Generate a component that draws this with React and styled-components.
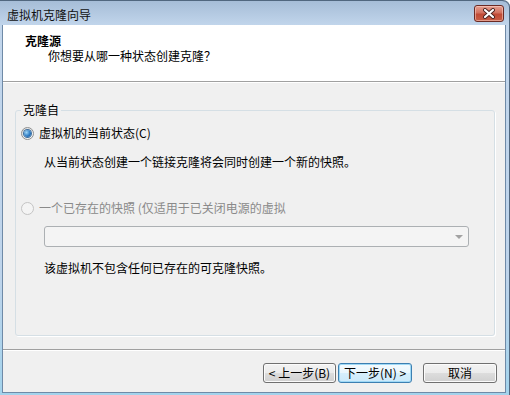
import styled, { createGlobalStyle } from 'styled-components';

const GlobalStyle = createGlobalStyle`
	html, body {
		margin: 0;
		padding: 0;
		background: #fff;
	}
	body {
		font: 12px/16px 'Noto Sans CJK SC', 'Liberation Sans', sans-serif;
		color: #000;
	}
	* {
		box-sizing: border-box;
	}
`;

const Window = styled.div`
	width: 510px;
	height: 395px;
	display: flex;
	flex-direction: column;
	background: linear-gradient(#a6bdd7, #c2d6ec 25px, #bed4eb 70%, #a3d3ec);
	border-top: 1px solid #51677f;
	border-top-right-radius: 7px;
	box-shadow: inset -1px 0 0 #51677f;
	overflow: hidden;
`;

const TitleBar = styled.div`
	height: 24px;
	display: flex;
	justify-content: space-between;
	align-items: flex-start;
	padding-left: 7px;
`;

const Title = styled.span`
	margin-top: 6px;
	font-size: 12px;
	line-height: 16px;
	color: #111;
`;

const CloseBtn = styled.div`
	width: 30px;
	height: 17px;
	margin: 4px 6px 0 0;
	display: flex;
	align-items: center;
	justify-content: center;
	border: 1px solid #6b2a24;
	border-radius: 3px;
	background: linear-gradient(#e6a091, #d2715f 45%, #c04a35 55%, #c85e46);
	box-shadow: inset 0 0 0 1px rgba(255, 220, 210, 0.5);
`;

const Client = styled.div`
	flex: 1;
	margin: 0 4px 2px 2px;
	display: flex;
	flex-direction: column;
	background: #f0f0f0;
	border: 1px solid #6f8aa7;
	border-top: none;
`;

const Header = styled.div`
	height: 57px;
	padding: 8px 0 0 22px;
	background: #fff;
	border-bottom: 1px solid #a0a0a0;
`;

const HeadTitle = styled.div`
	font-weight: bold;
`;

const HeadSub = styled.div`
	margin-top: -1px;
	padding-left: 23px;
`;

const Body = styled.div`
	flex: 1;
	display: flex;
	flex-direction: column;
	padding: 19px 10px 13px 12px;
	border-top: 1px solid #fff;
`;

const Group = styled.fieldset`
	flex: 1;
	margin: 0;
	min-width: 0;
	padding: 0 0 0 5px;
	border: 1px solid #d5dfe5;
	border-radius: 3px;
	box-shadow: 1px 1px 0 #fff;
`;

const Legend = styled.legend`
	padding: 0 2px;
	line-height: 16px;
`;

const RadioRow = styled.label`
	display: flex;
	align-items: center;
	gap: 5px;
	margin-top: ${(p) => p.$top}px;
	color: ${(p) => (p.$disabled ? '#8a8a8a' : '#000')};
	white-space: nowrap;
`;

const Radio = styled.span`
	width: 13px;
	height: 13px;
	flex: none;
	display: flex;
	align-items: center;
	justify-content: center;
	border-radius: 50%;
	border: 1px solid ${(p) => (p.$disabled ? '#c4c4c4' : '#8e8f8f')};
	background: ${(p) =>
		p.$disabled ? '#f4f4f4' : 'linear-gradient(135deg, #dcdcdc, #fbfbfb)'};
	&::after {
		content: '';
		display: ${(p) => (p.$checked ? 'block' : 'none')};
		width: 7px;
		height: 7px;
		border-radius: 50%;
		background: radial-gradient(circle at 35% 35%, #9fd6f7, #2e7cc4 55%, #144f91);
		box-shadow: 0 0 0 1px #3e6f9e;
	}
`;

const Indented = styled.div`
	margin-top: ${(p) => p.$top}px;
	margin-left: 23px;
`;

const Combo = styled.div`
	width: 425px;
	height: 21px;
	margin: 10px 0 0 23px;
	display: flex;
	justify-content: flex-end;
	align-items: center;
	padding-right: 5px;
	background: #f4f4f4;
	border: 1px solid #acb0b3;
	border-radius: 3px;
`;

const Arrow = styled.span`
	width: 0;
	height: 0;
	border-left: 4px solid transparent;
	border-right: 4px solid transparent;
	border-top: 4px solid #a2a2a2;
`;

const Footer = styled.div`
	height: 43px;
	display: flex;
	justify-content: flex-end;
	align-items: flex-start;
	padding: 13px 8px 0 0;
	border-top: 1px solid #a0a0a0;
	box-shadow: inset 0 1px 0 #fff;
`;

const Button = styled.button`
	width: ${(p) => p.$w}px;
	height: 20px;
	margin-left: ${(p) => p.$gap}px;
	padding: 0;
	font: 12px/16px 'Noto Sans CJK SC', 'Liberation Sans', sans-serif;
	color: #000;
	white-space: nowrap;
	border: 1px solid ${(p) => (p.$primary ? '#3c7fb1' : '#707070')};
	border-radius: 3px;
	background: ${(p) =>
		p.$primary
			? 'linear-gradient(#f4fbfe, #e9f6fd 50%, #d6effc 50%, #cbe9fa)'
			: 'linear-gradient(#f3f3f3, #ebebeb 50%, #dddddd 50%, #d0d0d0)'};
	box-shadow: inset 0 0 0 1px ${(p) => (p.$primary ? '#9fd9f6' : '#fbfbfb')};
`;

function App() {
	return (
		<>
			<GlobalStyle />
			<Window>
				<TitleBar>
					<Title>虚拟机克隆向导</Title>
					<CloseBtn>
						<svg width='14' height='11' viewBox='0 0 14 11'>
							<path d='M3 2 L11 9 M11 2 L3 9' stroke='#4a2420' strokeWidth='4' strokeLinecap='round' />
							<path d='M3 2 L11 9 M11 2 L3 9' stroke='#fff' strokeWidth='2.2' strokeLinecap='round' />
						</svg>
					</CloseBtn>
				</TitleBar>

				<Client>
					<Header>
						<HeadTitle>克隆源</HeadTitle>
						<HeadSub>你想要从哪一种状态创建克隆？</HeadSub>
					</Header>

					<Body>
						<Group>
							<Legend>克隆自</Legend>
							<RadioRow $top={7}>
								<Radio $checked />
								虚拟机的当前状态(C)
							</RadioRow>
							<Indented $top={13}>从当前状态创建一个链接克隆将会同时创建一个新的快照。</Indented>

							<RadioRow $top={30} $disabled>
								<Radio $disabled />
								一个已存在的快照 (仅适用于已关闭电源的虚拟
							</RadioRow>
							<Combo>
								<Arrow />
							</Combo>
							<Indented $top={13}>该虚拟机不包含任何已存在的可克隆快照。</Indented>
						</Group>
					</Body>

					<Footer>
						<Button $w={73} $gap={0}>&lt; 上一步(B)</Button>
						<Button $w={74} $gap={2} $primary>下一步(N) &gt;</Button>
						<Button $w={74} $gap={11}>取消</Button>
					</Footer>
				</Client>
			</Window>
		</>
	);
}

export default App;
